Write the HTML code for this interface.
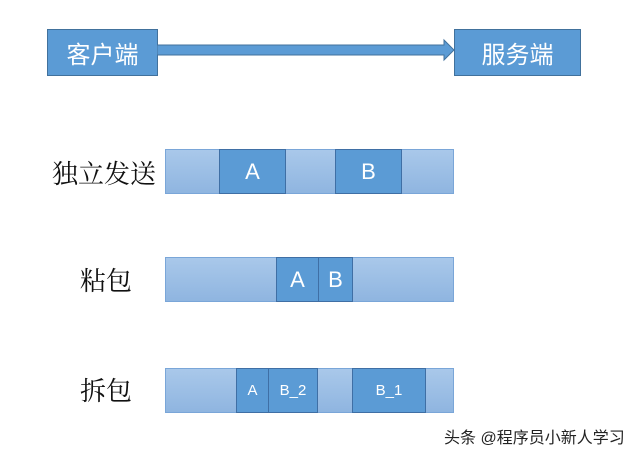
<!DOCTYPE html>
<html><head><meta charset="utf-8"><style>
body{margin:0;width:640px;height:461px;background:#fff;position:relative;overflow:hidden;font-family:"Liberation Sans","Noto Sans CJK SC",sans-serif}
.a{position:absolute}
.box{background:#5b9bd5;border:1px solid #41719c;box-sizing:border-box;color:#fff;font-size:24px;display:flex;align-items:center;justify-content:center}
.bar{background:linear-gradient(#a9c8ea,#8fb5e0);border:1px solid #7aa6d8;box-sizing:border-box}
.blk{background:#5b9bd5;border:1px solid #3f6fa5;box-sizing:border-box;color:#fff;display:flex;align-items:center;justify-content:center}
.lbl{font-size:26px;color:#111;font-family:"Noto Serif CJK SC",serif}
</style></head><body>
<div class="a box" style="left:47px;top:29px;width:111px;height:47px">客户端</div>
<div class="a box" style="left:454px;top:29px;width:127px;height:47px">服务端</div>
<svg class="a" style="left:157px;top:38px" width="300" height="26"><polygon points="0,7 287,7 287,2 297,12 287,22 287,17 0,17" fill="#5b9bd5" stroke="#41719c" stroke-width="1"/></svg>

<div class="a lbl" style="left:52px;top:154px">独立发送</div>
<div class="a bar" style="left:165px;top:149px;width:289px;height:45px"></div>
<div class="a blk" style="left:219px;top:149px;width:67px;height:45px;font-size:22px">A</div>
<div class="a blk" style="left:335px;top:149px;width:67px;height:45px;font-size:22px">B</div>

<div class="a lbl" style="left:80px;top:261px">粘包</div>
<div class="a bar" style="left:165px;top:257px;width:289px;height:45px"></div>
<div class="a blk" style="left:276px;top:257px;width:43px;height:45px;font-size:22px">A</div>
<div class="a blk" style="left:318px;top:257px;width:35px;height:45px;font-size:22px">B</div>

<div class="a lbl" style="left:80px;top:371px">拆包</div>
<div class="a bar" style="left:165px;top:368px;width:289px;height:45px"></div>
<div class="a blk" style="left:236px;top:368px;width:33px;height:45px;font-size:15px">A</div>
<div class="a blk" style="left:268px;top:368px;width:50px;height:45px;font-size:15px">B_2</div>
<div class="a blk" style="left:352px;top:368px;width:74px;height:45px;font-size:15px">B_1</div>

<div class="a" style="left:444px;top:424px;font-size:16px;color:#222;white-space:nowrap">头条 @程序员小新人学习</div>
</body></html>
